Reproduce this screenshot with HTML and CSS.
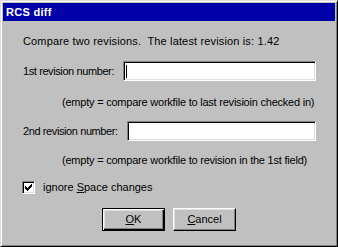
FILE: index.html
```html
<!DOCTYPE html>
<html>
<head>
<meta charset="utf-8">
<title>RCS diff</title>
<link rel="stylesheet" href="styles.css">
</head>
<body>
<div class="window">
  <div class="titlebar"><span class="title">RCS diff</span></div>
  <div class="content">
    <p class="intro">Compare two revisions.&nbsp; The latest revision is: 1.42</p>
    <div class="row row-first">
      <span class="label">1st revision number:</span>
      <div class="field"><span class="caret"></span></div>
    </div>
    <p class="hint hint-first">(empty = compare workfile to last revisioin checked in)</p>
    <div class="row row-second">
      <span class="label">2nd revision number:</span>
      <div class="field"></div>
    </div>
    <p class="hint hint-second">(empty = compare workfile to revision in the 1st field)</p>
    <div class="check-row">
      <span class="checkbox">
        <svg width="7" height="7" viewBox="0 0 7 7"><path d="M0 2h1v1h1v1h1v-1h1v-1h1v-1h1v-1h1v3h-1v1h-1v1h-1v1h-1v1h-1v-1h-1v-1h-1z" fill="#000"/></svg>
      </span>
      <span class="check-label">ignore <u>S</u>pace changes</span>
    </div>
    <div class="buttons">
      <div class="button default"><span class="button-inner"><u>O</u>K</span></div>
      <div class="button"><span class="button-inner"><u>C</u>ancel</span></div>
    </div>
  </div>
</div>
</body>
</html>
```
FILE: styles.css
```css
html, body {
  margin: 0;
  padding: 0;
  background: #c0c0c0;
}
body {
  font-family: "Liberation Sans", Arial, sans-serif;
  font-size: 11px;
  color: #000;
}
.window {
  box-sizing: border-box;
  width: 338px;
  height: 247px;
  background: #c0c0c0;
  border: 1px solid;
  border-color: #dfdfdf #000 #000 #dfdfdf;
  box-shadow: inset 1px 1px 0 #fff, inset -1px -1px 0 #808080;
  padding: 2px;
  display: flex;
  flex-direction: column;
}
.titlebar {
  height: 18px;
  background: #0000a8;
  display: flex;
  align-items: center;
  padding-left: 3px;
}
.title {
  color: #fff;
  font-weight: bold;
  font-size: 11px;
  letter-spacing: 0.3px;
}
.content {
  padding: 0 19px 0 20px;
  display: flex;
  flex-direction: column;
  line-height: 13px;
  white-space: nowrap;
}
p { margin: 0; }
.intro {
  margin-top: 14px;
  letter-spacing: 0.15px;
}
.row {
  display: flex;
  align-items: center;
  gap: 9px;
}
.label { letter-spacing: -0.4px; }
.row-first { margin-top: 13px; }
.row-second { margin-top: 12px; }
.field {
  flex: 1;
  height: 20px;
  box-sizing: border-box;
  background: #fff;
  border: 1px solid;
  border-color: #808080 #fff #fff #808080;
  box-shadow: inset 1px 1px 0 #000, inset -1px -1px 0 #dfdfdf;
  display: flex;
  align-items: center;
  padding-left: 2px;
}
.caret {
  width: 1px;
  height: 13px;
  background: #000;
}
.hint {
  margin-left: 39px;
  letter-spacing: -0.22px;
}
.hint-first { margin-top: 15px; }
.hint-second { margin-top: 13px; }
.check-row {
  display: flex;
  align-items: center;
  margin-top: 14px;
  margin-left: -1px;
}
.checkbox {
  width: 13px;
  height: 13px;
  box-sizing: border-box;
  background: #fff;
  border: 1px solid;
  border-color: #808080 #fff #fff #808080;
  box-shadow: inset 1px 1px 0 #000, inset -1px -1px 0 #dfdfdf;
  display: flex;
  align-items: center;
  justify-content: center;
}
.check-label {
  margin-left: 8px;
}
.buttons {
  display: flex;
  gap: 8px;
  margin-top: 14px;
  margin-left: 79px;
}
.button {
  box-sizing: border-box;
  width: 63px;
  height: 23px;
  background: #c0c0c0;
  border: 1px solid;
  border-color: #fff #000 #000 #fff;
  box-shadow: inset -1px -1px 0 #808080, inset 1px 1px 0 #dfdfdf;
  display: flex;
  align-items: center;
  justify-content: center;
}
.button.default {
  border: 1px solid #000;
  box-shadow: inset 1px 1px 0 #fff, inset -1px -1px 0 #000, inset -2px -2px 0 #808080, inset 2px 2px 0 #dfdfdf;
}
.button-inner {
  line-height: 13px;
}
u { text-decoration-thickness: 1px; text-underline-offset: 1px; }
```
